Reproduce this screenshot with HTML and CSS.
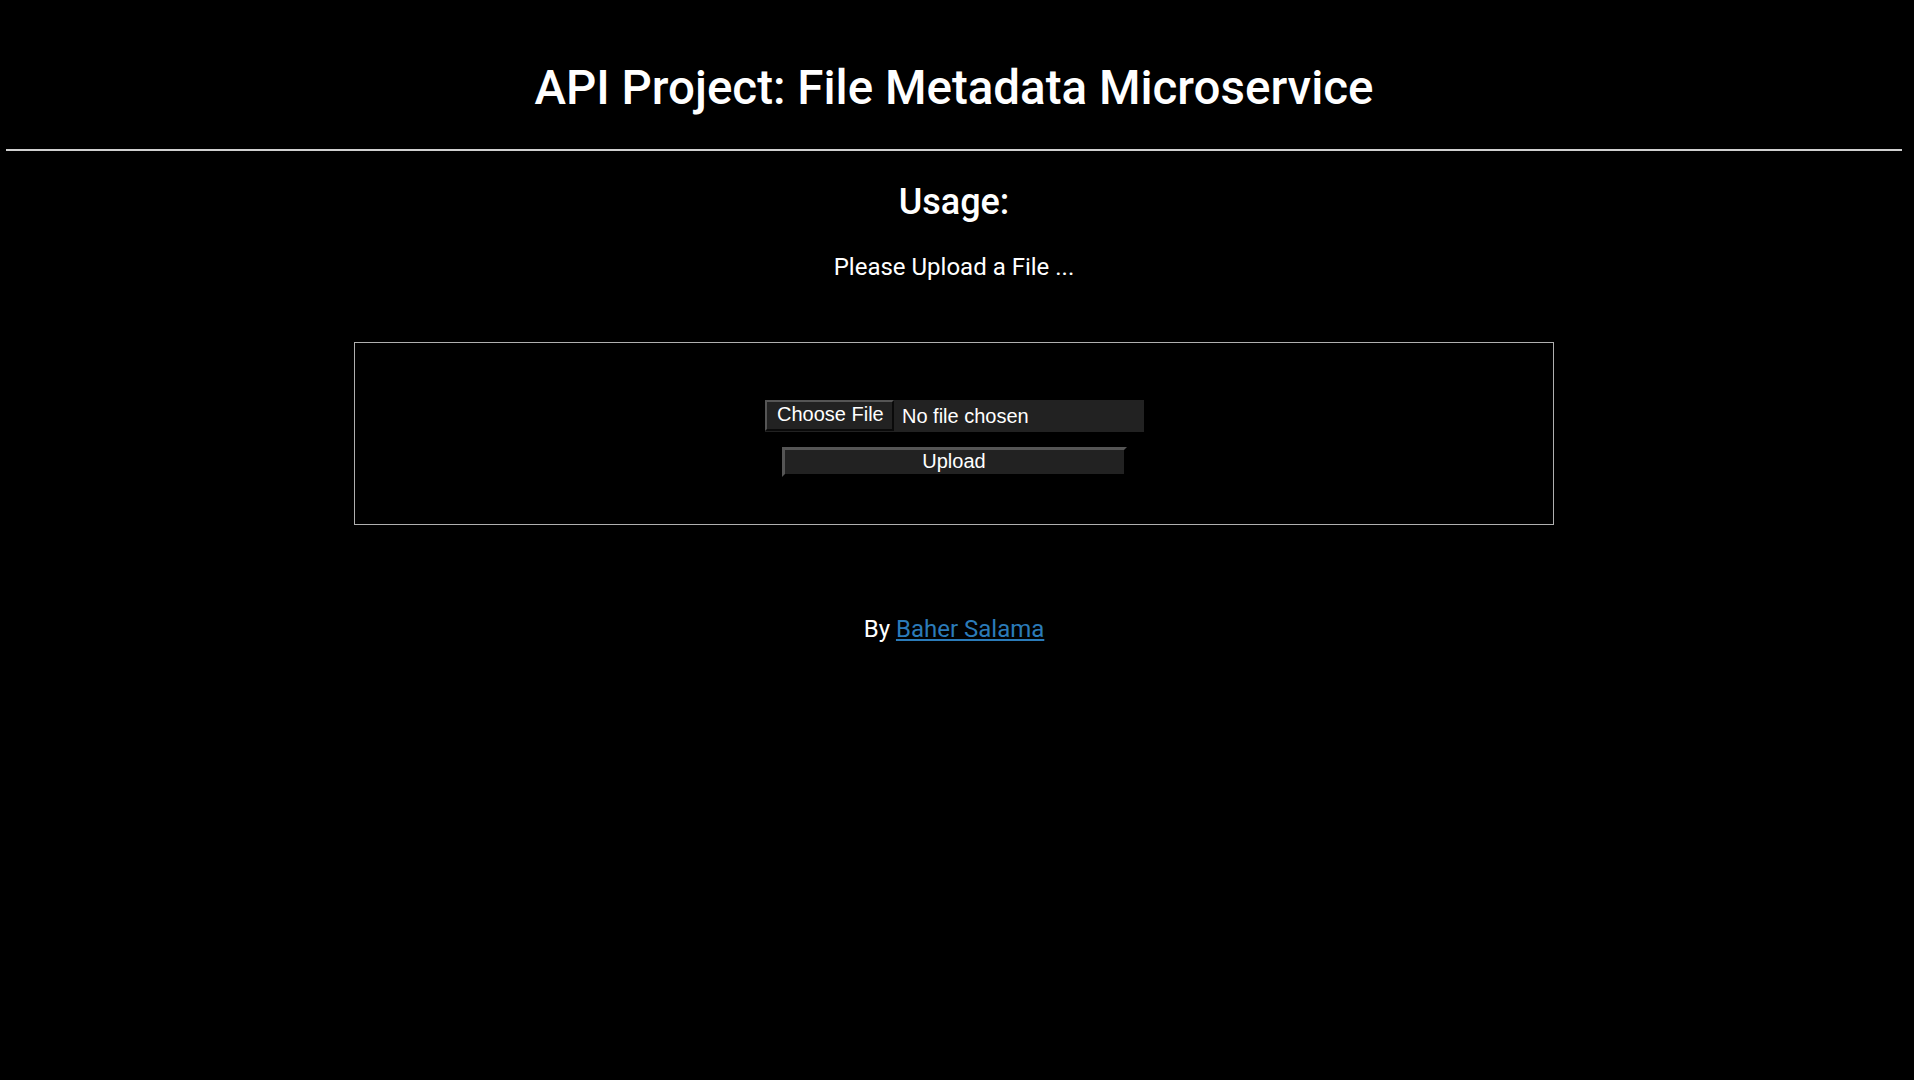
FILE: index.html
```html
<!DOCTYPE html>
<html lang="en">
<head>
<meta charset="utf-8">
<title>File Metadata Microservice</title>
<link rel="stylesheet" href="styles.css">
</head>
<body>
<div class="page">
  <h1 class="title">API Project: File Metadata Microservice</h1>
  <hr class="rule">
  <h2 class="usage">Usage:</h2>
  <p class="hint">Please Upload a File ...</p>
  <form class="upload-box" onsubmit="return false">
    <label class="file-field">
      <input class="file-input" type="file" name="upfile">
      <span class="file-btn">Choose File</span>
      <span class="file-name">No file chosen</span>
    </label>
    <button class="upload-btn" type="submit">Upload</button>
  </form>
  <p class="footer">By <a class="author" href="#">Baher Salama</a></p>
</div>
</body>
</html>
```
FILE: styles.css
```css
html, body {
  background: #000;
  color: #fff;
}
body {
  margin: 0 12px 0 6px;
  font-family: Roboto, "Liberation Sans", sans-serif;
}
.page {
  display: flex;
  flex-direction: column;
  align-items: center;
}
.title {
  font-size: 47.5px;
  font-weight: 500;
  line-height: 56px;
  margin: 60px 0 0;
}
.rule {
  align-self: stretch;
  margin: 33px 0 0;
  border: 0;
  height: 2px;
  background: #d0d0d0;
}
.usage {
  font-size: 36px;
  font-weight: 500;
  line-height: 42px;
  margin: 30px 0 0;
}
.hint {
  font-size: 24px;
  line-height: 28px;
  margin: 30px 0 0;
}
.upload-box {
  width: 1200px;
  box-sizing: border-box;
  border: 1px solid #b0b0b0;
  margin: 61px 0 0;
  padding: 57px 0 47px;
  display: flex;
  flex-direction: column;
  align-items: center;
  gap: 15px;
  font-family: "Liberation Sans", Arial, sans-serif;
  font-size: 20px;
}
.file-field {
  display: flex;
  align-items: stretch;
  height: 32px;
  width: 379px;
  background: #222;
  margin-left: 1px;
}
.file-input {
  display: none;
}
.file-btn {
  display: flex;
  align-items: center;
  box-sizing: border-box;
  width: 129px;
  height: 31px;
  padding: 0 0 2px 10px;
  border: 2px solid;
  border-color: #555 #0a0a0a #0a0a0a #555;
  background: #222;
  color: #fff;
}
.file-name {
  display: flex;
  align-items: center;
  padding-left: 8px;
  color: #fff;
}
.upload-btn {
  width: 345px;
  height: 30px;
  box-sizing: border-box;
  border: 3px solid;
  border-color: #555 #000 #000 #555;
  background: #222;
  color: #fff;
  font: inherit;
  padding: 0 0 2px;
}
.footer {
  font-size: 24px;
  line-height: 28px;
  margin: 90px 0 0;
}
.author {
  color: #2b7bb9;
}
```
